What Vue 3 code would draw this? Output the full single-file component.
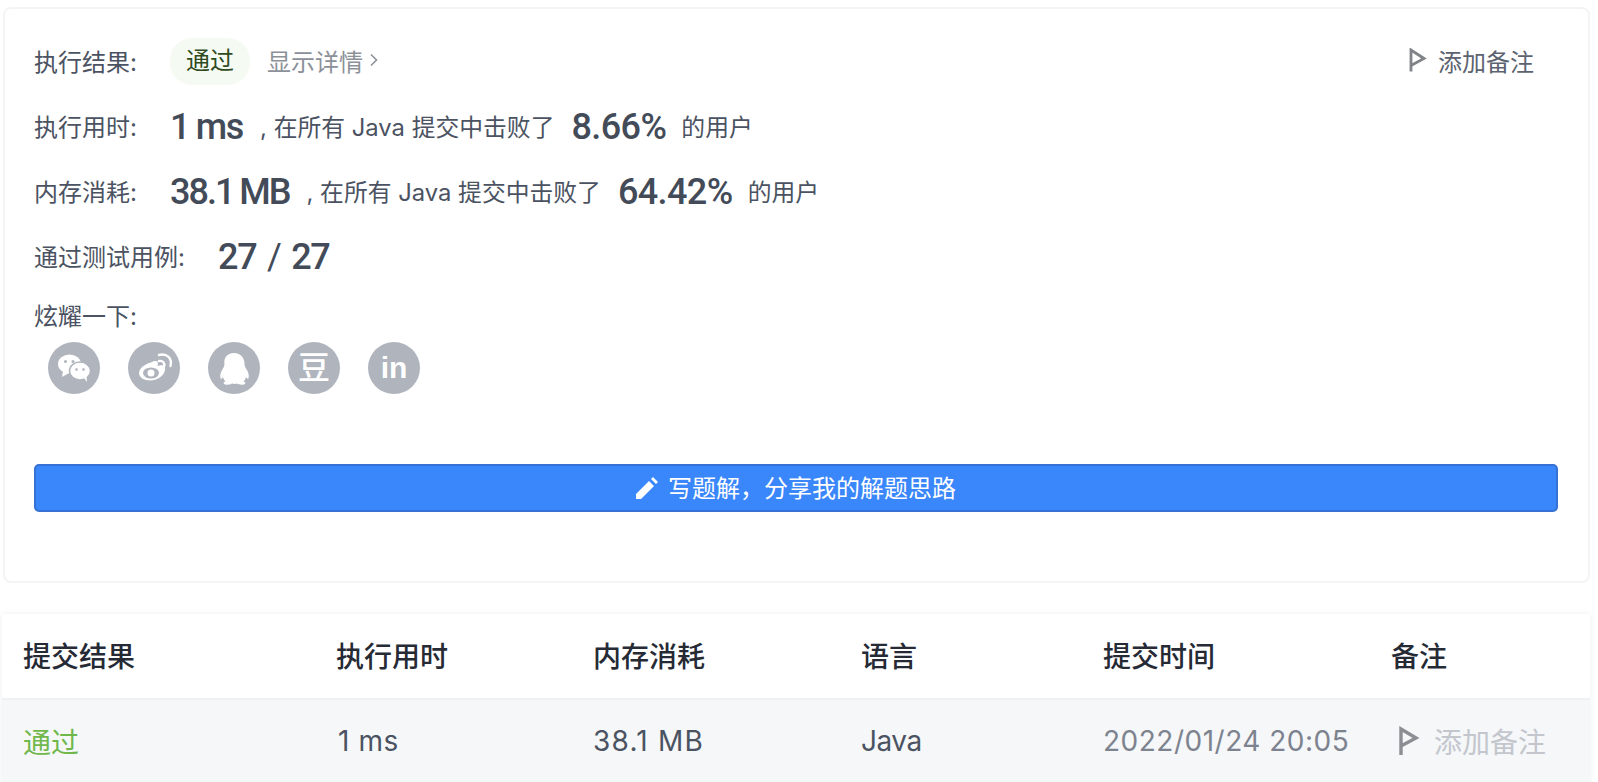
<script setup>
const columns = [
  { title: '提交结果', cls: 'pass', value: '通过' },
  { title: '执行用时', cls: 'time', value: '1 ms' },
  { title: '内存消耗', cls: 'mem', value: '38.1 MB' },
  { title: '语言', cls: 'lang', value: 'Java' },
  { title: '提交时间', cls: 'date', value: '2022/01/24 20:05' },
]
</script>

<template>
  <main class="page">
    <section class="card">
      <div class="line">
        <span class="label">执行结果:</span>
        <span class="pill">通过</span>
        <a class="detail">显示详情
          <svg class="chevron" viewBox="0 0 8 14"><path d="M1 1.500 6.500 7 1 12.500" /></svg>
        </a>
        <a class="note">
          <svg class="flag" viewBox="0 0 18 24"><path d="M2 23.500V2l13 8.500L2 17.500" /></svg>
          添加备注
        </a>
      </div>
      <div class="line">
        <span class="label">执行用时:</span>
        <span class="big unit">1 ms</span>
        <span class="sentence first">, 在所有 Java 提交中击败了</span>
        <span class="big pct">8.66%</span>
        <span class="sentence">的用户</span>
      </div>
      <div class="line">
        <span class="label">内存消耗:</span>
        <span class="big unit tight">38.1 MB</span>
        <span class="sentence first">, 在所有 Java 提交中击败了</span>
        <span class="big pct">64.42%</span>
        <span class="sentence">的用户</span>
      </div>
      <div class="line">
        <span class="label wide">通过测试用例:</span>
        <span class="big unit">27 <i class="slash">/</i> 27</span>
      </div>
      <div class="share-title">炫耀一下:</div>
      <div class="share">
        <span class="circle">
          <svg viewBox="0 0 52 52">
            <ellipse cx="21.500" cy="22" rx="11.500" ry="9.500" fill="#fff" />
            <path d="M15 29l-1 6 7-4z" fill="#fff" />
            <ellipse cx="32" cy="29" rx="10.500" ry="9" fill="#fff" stroke="#afb4bd" stroke-width="1.500" />
            <path d="M36 36l3 4-.5-6z" fill="#fff" />
            <circle cx="17.500" cy="19.500" r="1.500" fill="#afb4bd" />
            <circle cx="25" cy="19.500" r="1.500" fill="#afb4bd" />
            <circle cx="28.500" cy="27.500" r="1.300" fill="#afb4bd" />
            <circle cx="35.500" cy="27.500" r="1.300" fill="#afb4bd" />
          </svg>
        </span>
        <span class="circle">
          <svg viewBox="0 0 52 52">
            <path d="M23 20.500c6-3 8-1 6.500 3.500 5-2 8.500 0 7.500 4-1 6-8 10.500-15 10.500-6 0-11-3-11-7.500 0-4 4.500-8.500 12-10.500z" fill="#fff" />
            <ellipse cx="23" cy="31" rx="8" ry="5.500" fill="#afb4bd" />
            <circle cx="23" cy="31" r="3.500" fill="#fff" />
            <path d="M31 19c3.500-.8 6 1.800 5.200 5M31 13c8-2 13.500 3.500 11.500 11" fill="none" stroke="#fff" stroke-width="2.400" stroke-linecap="round" />
          </svg>
        </span>
        <span class="circle">
          <svg viewBox="0 0 52 52">
            <path d="M26 11c7 0 10.500 5 10.500 11 0 1.500.5 3 1.500 4.500 2 3 3.500 6 2.500 10-.5 1-1.500 0-2.500-1.500-.5 2-1.500 3.500-2.500 4.500 1.500.5 2.500 1.500 1.500 2.500-1.500 1-6 1-8-.5-1.500.5-3 .5-5 0-2 1.500-6.500 1.500-8 .5-1-1 0-2 1.500-2.500-1-1-2-2.500-2.500-4.500-1 1.500-2 2.500-2.500 1.500-1-4 .5-7 2.500-10 1-1.500 1.500-3 1.500-4.500C15.500 16 19 11 26 11z" fill="#fff" />
          </svg>
        </span>
        <span class="circle glyph">豆</span>
        <span class="circle latin">in</span>
      </div>
      <button class="write">
        <svg class="pen" viewBox="0 0 22 22"><path d="M0 22v-5L13 4l5 5L5 22zM15 2l2-2 5 5-2 2z" /></svg>
        <span class="write-text">写题解，分享我的解题思路</span>
      </button>
    </section>

    <section class="table">
      <div v-for="col in columns" :key="col.title" class="head">{{ col.title }}</div>
      <div class="head">备注</div>
      <div v-for="col in columns" :key="col.value" class="cell" :class="col.cls">{{ col.value }}</div>
      <div class="cell remark">
        <svg class="flag small" viewBox="0 0 22 30"><path d="M3 29V3l15 9L3 20" /></svg>
        添加备注
      </div>
    </section>
  </main>
</template>

<style>
html,
body {
  margin: 0;
  background: #fff;
  overflow: hidden;
}
</style>

<style scoped>
.page {
  height: 782px;
  overflow: hidden;
  padding: 7px 8px 0 2px;
  box-sizing: border-box;
  font-family: "Inter", "Noto Sans CJK SC", sans-serif;
  color: #4b5362;
}
.card {
  margin-left: 1px;
  padding: 20px 30px 69px 29px;
  border: 2px solid #f3f4f6;
  border-radius: 8px;
  box-sizing: border-box;
  height: 576px;
}
.line {
  display: flex;
  align-items: center;
  height: 65px;
  font-size: 24px;
  white-space: nowrap;
}
.label {
  width: 136px;
  flex: none;
  padding-bottom: 3px;
}
.label.wide {
  width: 184px;
}
.pill {
  width: 80px;
  height: 47px;
  line-height: 45px;
  text-align: center;
  border-radius: 22px;
  background: #f5faf2;
  color: #2f4a1e;
}
.detail {
  margin-left: 17px;
  padding-bottom: 3px;
  color: #8c9199;
  display: flex;
  align-items: center;
  gap: 7px;
}
.chevron {
  width: 8px;
  height: 14px;
  fill: none;
  stroke: #8c9199;
  stroke-width: 1.600;
}
.note {
  margin-left: auto;
  margin-right: 24px;
  padding-bottom: 3px;
  display: flex;
  align-items: center;
  gap: 11px;
  color: #5c6370;
}
.flag {
  width: 18px;
  height: 24px;
  fill: none;
  stroke: #808387;
  stroke-width: 2.800;
}
.big {
  font-family: "Roboto", sans-serif;
  font-weight: 500;
  font-size: 36px;
  letter-spacing: -0.6px;
  color: #434b59;
}
.unit {
  letter-spacing: -1.300px;
  word-spacing: -1px;
}
.tight {
  letter-spacing: -2px;
  word-spacing: -1px;
}
.slash {
  font-style: normal;
  font-weight: 400;
  margin: 0 4px;
}
.sentence {
  font-size: 23.800px;
  margin-left: 15px;
  padding-bottom: 3px;
}
.sentence.first {
  margin-left: 17px;
}
.pct {
  margin-left: 17px;
}
.share-title {
  height: 56px;
  line-height: 55px;
  font-size: 24px;
  margin-bottom: -3px;
}
.share {
  display: flex;
  gap: 28px;
  padding-left: 14px;
}
.circle {
  width: 52px;
  height: 52px;
  border-radius: 50%;
  background: #afb4bd;
  color: #fff;
  display: flex;
  align-items: center;
  justify-content: center;
}
.circle svg {
  width: 52px;
  height: 52px;
}
.glyph {
  font-size: 32px;
  font-weight: 500;
  line-height: 52px;
}
.latin {
  font-family: "Liberation Sans", sans-serif;
  font-weight: 700;
  font-size: 30px;
}
.write {
  display: flex;
  align-items: center;
  justify-content: center;
  gap: 10px;
  width: 100%;
  height: 48px;
  margin-top: 70px;
  border: 2px solid #3671d4;
  border-radius: 5px;
  background: #3a86fb;
  color: #fff;
  font-family: inherit;
  font-size: 24px;
}
.write-text {
  padding-bottom: 3px;
}
.pen {
  width: 22px;
  height: 22px;
  fill: #fff;
}
.table {
  display: grid;
  grid-template-columns: 313px 257px 268px 242px 288px 1fr;
  margin-top: 31px;
  background: #fff;
  box-shadow: 0 0 6px rgba(0, 0, 0, 0.07);
}
.head {
  height: 84px;
  line-height: 86px;
  padding-left: 21px;
  border-bottom: 2px solid #eff0f2;
  font-size: 28px;
  font-weight: 500;
  color: #262a35;
}
.cell {
  height: 90px;
  padding-left: 21px;
  padding-bottom: 9px;
  box-sizing: border-box;
  display: flex;
  align-items: center;
  background: #f5f7f9;
  font-size: 28px;
  letter-spacing: 0.6px;
  white-space: nowrap;
}
.pass {
  color: #70b84c;
  letter-spacing: 0;
}
.time {
  padding-left: 23px;
}
.mem {
  letter-spacing: 1.200px;
}
.lang {
  letter-spacing: -0.5px;
}
.date {
  color: #7d838e;
  letter-spacing: 0.500px;
}
.remark {
  color: #c3c6cc;
  gap: 14px;
  padding-left: 28px;
  letter-spacing: 0;
}
.flag.small {
  width: 22px;
  height: 30px;
  stroke: #8b8e93;
  stroke-width: 3.400;
}
</style>
